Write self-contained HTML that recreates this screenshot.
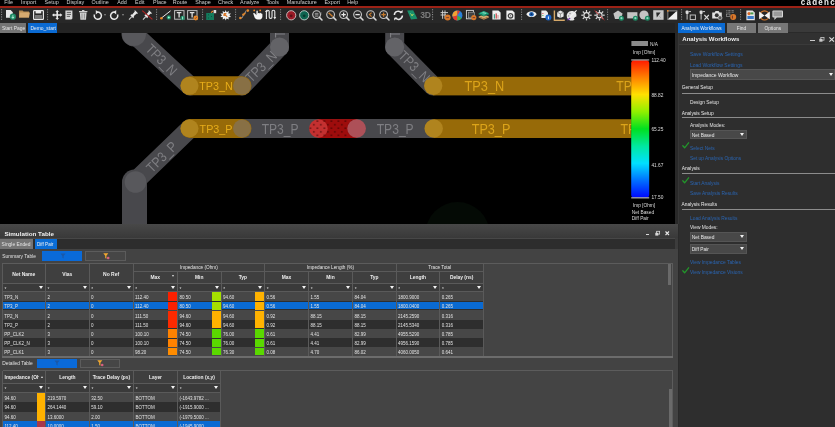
<!DOCTYPE html>
<html><head><meta charset="utf-8">
<style>
*{margin:0;padding:0;box-sizing:border-box}
html,body{width:835px;height:427px;overflow:hidden;background:#2a2a2a;font-family:"Liberation Sans",sans-serif;color:#ddd;position:relative}
.a{position:absolute}
.t{position:absolute;white-space:nowrap;line-height:1}
#root{position:absolute;left:0;top:0;width:835px;height:427px;overflow:hidden;will-change:transform}
svg{overflow:visible}
#canvas{left:0;top:33px;width:675px;height:191px;background:#000;overflow:hidden}
</style></head><body>
<div id="root"><div class="a" style="left:0.00px;top:0.00px;width:835.00px;height:6.00px;background:#000;"></div>
<div class="t" style="left:4.2px;top:0.2px;font-size:5.4px;color:#d0d0d0">File</div>
<div class="t" style="left:21px;top:0.2px;font-size:5.4px;color:#d0d0d0">Import</div>
<div class="t" style="left:44.6px;top:0.2px;font-size:5.4px;color:#d0d0d0">Setup</div>
<div class="t" style="left:66.5px;top:0.2px;font-size:5.4px;color:#d0d0d0">Display</div>
<div class="t" style="left:91.6px;top:0.2px;font-size:5.4px;color:#d0d0d0">Outline</div>
<div class="t" style="left:117.2px;top:0.2px;font-size:5.4px;color:#d0d0d0">Add</div>
<div class="t" style="left:135.1px;top:0.2px;font-size:5.4px;color:#d0d0d0">Edit</div>
<div class="t" style="left:153.1px;top:0.2px;font-size:5.4px;color:#d0d0d0">Place</div>
<div class="t" style="left:172.8px;top:0.2px;font-size:5.4px;color:#d0d0d0">Route</div>
<div class="t" style="left:195.2px;top:0.2px;font-size:5.4px;color:#d0d0d0">Shape</div>
<div class="t" style="left:218px;top:0.2px;font-size:5.4px;color:#d0d0d0">Check</div>
<div class="t" style="left:240.1px;top:0.2px;font-size:5.4px;color:#d0d0d0">Analyze</div>
<div class="t" style="left:266.4px;top:0.2px;font-size:5.4px;color:#d0d0d0">Tools</div>
<div class="t" style="left:286.8px;top:0.2px;font-size:5.4px;color:#d0d0d0">Manufacture</div>
<div class="t" style="left:324.5px;top:0.2px;font-size:5.4px;color:#d0d0d0">Export</div>
<div class="t" style="left:347.2px;top:0.2px;font-size:5.4px;color:#d0d0d0">Help</div>
<div class="t" style="left:800.8px;top:-1px;font-size:8px;color:#f0f0f0;font-weight:bold;letter-spacing:1.25px;transform:scaleY(1.15);transform-origin:0 100%">cadence</div>
<div class="a" style="left:0.00px;top:5.60px;width:835.00px;height:2.50px;background:#9c2216;"></div>
<div class="a" style="left:0.00px;top:8.00px;width:835.00px;height:14.50px;background:#282828;"></div>
<svg class="a" style="left:5.7px;top:10.2px" width="10" height="10" viewBox="0 0 10 10"><path d="M0 0H4.6L6.8 2.2V7.8H0Z" fill="#e8e8e8"/><circle cx="6.9" cy="6.7" r="3.1" fill="#1e8a64"/><path d="M6.9 5.2V8.2M5.6 6.9L6.9 8.3L8.2 6.9" stroke="#cfe" stroke-width="0.8" fill="none"/></svg>
<svg class="a" style="left:1.1px;top:9.3px" width="1.4" height="11" viewBox="0 0 1.4 11"><rect x="0" y="0.2" width="1.1" height="1.1" fill="#8a8a8a"/><rect x="0" y="2.6" width="1.1" height="1.1" fill="#8a8a8a"/><rect x="0" y="5" width="1.1" height="1.1" fill="#8a8a8a"/><rect x="0" y="7.4" width="1.1" height="1.1" fill="#8a8a8a"/><rect x="0" y="9.8" width="1.1" height="1.1" fill="#8a8a8a"/></svg>
<svg class="a" style="left:18.9px;top:10.2px" width="11" height="8" viewBox="0 0 11 8"><path d="M0 0.6H3.6L4.6 1.6H10V7.5H0Z" fill="#b88c52"/><path d="M0.8 2.6H10.9L10 7.5H0Z" fill="#d6aa70"/></svg>
<svg class="a" style="left:32.7px;top:10px" width="11" height="10" viewBox="0 0 11 10"><rect x="0.6" y="0.6" width="9.8" height="8.8" rx="0.6" fill="none" stroke="#e8e8e8" stroke-width="1.2"/><rect x="2.6" y="0.6" width="5.6" height="2.8" fill="#e8e8e8"/><rect x="2" y="5" width="7" height="4" fill="#777"/></svg>
<svg class="a" style="left:46.8px;top:9.3px" width="1.4" height="11" viewBox="0 0 1.4 11"><rect x="0" y="0.2" width="1.1" height="1.1" fill="#8a8a8a"/><rect x="0" y="2.6" width="1.1" height="1.1" fill="#8a8a8a"/><rect x="0" y="5" width="1.1" height="1.1" fill="#8a8a8a"/><rect x="0" y="7.4" width="1.1" height="1.1" fill="#8a8a8a"/><rect x="0" y="9.8" width="1.1" height="1.1" fill="#8a8a8a"/></svg>
<svg class="a" style="left:51.6px;top:9.8px" width="10.5" height="10" viewBox="0 0 10.5 10"><path d="M5.2 0L7 2H6V4.2H8.2V3.2L10.4 5L8.2 6.8V5.8H6V8H7L5.2 10L3.4 8H4.4V5.8H2.2V6.8L0 5L2.2 3.2V4.2H4.4V2H3.4Z" fill="#e8e8e8"/></svg>
<svg class="a" style="left:65px;top:9.9px" width="9" height="10" viewBox="0 0 9 10"><path d="M0.4 0.4H7.4V8.6L6.4 9.6H0.4Z" fill="#d8d8d8"/><path d="M1.8 2.4H6M1.8 4.4H6M1.8 6.4H5" stroke="#555" stroke-width="0.9"/></svg>
<svg class="a" style="left:78.8px;top:9.8px" width="8.6" height="10" viewBox="0 0 8.6 10"><rect x="0" y="1" width="8.4" height="1.2" fill="#cfcfcf"/><rect x="3" y="0" width="2.4" height="1" fill="#cfcfcf"/><path d="M0.8 2.6H7.6L7 9.8H1.4Z" fill="#d0d0d0"/><path d="M3 3.6V8.6M5.4 3.6V8.6" stroke="#8a8a8a" stroke-width="0.9"/></svg>
<svg class="a" style="left:91.9px;top:9.7px" width="10" height="10.5" viewBox="0 0 10 10.5"><path d="M2.4 4.6A3.6 3.6 0 1 0 5 2.2" fill="none" stroke="#e8e8e8" stroke-width="1.5"/><path d="M3.8 0L6.4 2.2L3.8 4.4Z" fill="#e8e8e8"/></svg>
<div class="a" style="left:103.60px;top:13.60px;width:0;height:0;border-left:1.40px solid transparent;border-right:1.40px solid transparent;border-top:2.00px solid #8a8a8a"></div>
<svg class="a" style="left:109.8px;top:9.7px" width="10" height="10.5" viewBox="0 0 10 10.5"><path d="M7.6 4.6A3.6 3.6 0 1 1 5 2.2" fill="none" stroke="#e8e8e8" stroke-width="1.5"/><path d="M6.2 0L3.6 2.2L6.2 4.4Z" fill="#e8e8e8"/></svg>
<div class="a" style="left:122.30px;top:13.60px;width:0;height:0;border-left:1.40px solid transparent;border-right:1.40px solid transparent;border-top:2.00px solid #8a8a8a"></div>
<svg class="a" style="left:128px;top:9.8px" width="11" height="10" viewBox="0 0 11 10"><path d="M1 9.6L3.8 6.6" stroke="#cfcfcf" stroke-width="1.1"/><path d="M2.4 5.2L5.2 8.2L6.2 6.8L5.6 6.2L8.8 3.4L9.6 3.8L10 3.2L7 0.2L6.4 0.8L6.8 1.6L4 4.8L3.4 4.2Z" fill="#e8e8e8"/></svg>
<svg class="a" style="left:141.7px;top:9.8px" width="11" height="10" viewBox="0 0 11 10"><path d="M1 9.6L3.8 6.6" stroke="#cfcfcf" stroke-width="1.1"/><path d="M2.4 5.2L5.2 8.2L6.2 6.8L5.6 6.2L8.8 3.4L9.6 3.8L10 3.2L7 0.2L6.4 0.8L6.8 1.6L4 4.8L3.4 4.2Z" fill="#e8e8e8"/><path d="M0.2 0.6L10.4 9.4" stroke="#b22222" stroke-width="1.1"/></svg>
<svg class="a" style="left:155.8px;top:9.3px" width="1.4" height="11" viewBox="0 0 1.4 11"><rect x="0" y="0.2" width="1.1" height="1.1" fill="#8a8a8a"/><rect x="0" y="2.6" width="1.1" height="1.1" fill="#8a8a8a"/><rect x="0" y="5" width="1.1" height="1.1" fill="#8a8a8a"/><rect x="0" y="7.4" width="1.1" height="1.1" fill="#8a8a8a"/><rect x="0" y="9.8" width="1.1" height="1.1" fill="#8a8a8a"/></svg>
<svg class="a" style="left:159.8px;top:9.8px" width="12" height="10" viewBox="0 0 12 10"><path d="M1.2 8.2L10.6 0.8" stroke="#e8e8e8" stroke-width="1"/><circle cx="1.4" cy="8.2" r="1.3" fill="#e8892a"/><circle cx="8.8" cy="7.4" r="2.2" fill="#1e8a64"/><circle cx="8.8" cy="7.4" r="1" fill="#9fd"/></svg>
<svg class="a" style="left:173.5px;top:9.9px" width="11" height="10" viewBox="0 0 11 10"><rect x="0.6" y="0.6" width="9.4" height="8.6" fill="none" stroke="#bdbdbd" stroke-width="1"/><path d="M2.8 2.6H7.4M5.1 2.6V7.6" stroke="#e0e0e0" stroke-width="1.3"/><circle cx="8.6" cy="8" r="2.2" fill="#1e8a64"/><path d="M8.6 6.6V9.4" stroke="#cfe" stroke-width="0.8"/></svg>
<svg class="a" style="left:187px;top:9.9px" width="11" height="10" viewBox="0 0 11 10"><rect x="0.6" y="0.6" width="9.4" height="8.6" fill="none" stroke="#bdbdbd" stroke-width="1"/><path d="M2.8 2.6H7.4M5.1 2.6V7.6" stroke="#e0e0e0" stroke-width="1.3"/><circle cx="8.8" cy="8" r="2.4" fill="#e8892a"/><path d="M7.8 9L9.8 7" stroke="#633" stroke-width="0.6"/></svg>
<svg class="a" style="left:201.9px;top:9.3px" width="1.4" height="11" viewBox="0 0 1.4 11"><rect x="0" y="0.2" width="1.1" height="1.1" fill="#8a8a8a"/><rect x="0" y="2.6" width="1.1" height="1.1" fill="#8a8a8a"/><rect x="0" y="5" width="1.1" height="1.1" fill="#8a8a8a"/><rect x="0" y="7.4" width="1.1" height="1.1" fill="#8a8a8a"/><rect x="0" y="9.8" width="1.1" height="1.1" fill="#8a8a8a"/></svg>
<svg class="a" style="left:205.7px;top:9.6px" width="11.5" height="10.5" viewBox="0 0 11.5 10.5"><rect x="0.2" y="3" width="7.8" height="7" fill="#147a5c"/><path d="M2 4.8H3M5 6.5H6M2 8H3" stroke="#0a4a38" stroke-width="0.8"/><path d="M5 2.6L7 1" stroke="#e8892a" stroke-width="1.2"/><rect x="7.6" y="0" width="2.6" height="3.2" fill="#ddd"/></svg>
<svg class="a" style="left:220px;top:9.6px" width="11.5" height="10.5" viewBox="0 0 11.5 10.5"><path d="M5.7 0L6.6 2.2L8.8 1L8.4 3.4L11 3.6L9.4 5.3L11 7L8.4 7.2L8.8 9.6L6.6 8.4L5.7 10.6L4.8 8.4L2.6 9.6L3 7.2L0.4 7L2 5.3L0.4 3.6L3 3.4L2.6 1L4.8 2.2Z" fill="#f0f0f0"/><rect x="3.4" y="3" width="4.6" height="4.6" fill="#eee"/><path d="M4 3.6L7.2 6.8M4 3.6H6.4M4 3.6V6" stroke="#d8782a" stroke-width="1.2"/></svg>
<svg class="a" style="left:234.6px;top:9.3px" width="1.4" height="11" viewBox="0 0 1.4 11"><rect x="0" y="0.2" width="1.1" height="1.1" fill="#8a8a8a"/><rect x="0" y="2.6" width="1.1" height="1.1" fill="#8a8a8a"/><rect x="0" y="5" width="1.1" height="1.1" fill="#8a8a8a"/><rect x="0" y="7.4" width="1.1" height="1.1" fill="#8a8a8a"/><rect x="0" y="9.8" width="1.1" height="1.1" fill="#8a8a8a"/></svg>
<svg class="a" style="left:238.6px;top:9.4px" width="11" height="11" viewBox="0 0 11 11"><path d="M1.4 9L3.4 8.6L4.6 5L6 4.6L7 1.6" stroke="#aaa" stroke-width="0.8" fill="none"/><circle cx="1.4" cy="9" r="1.3" fill="#e8892a"/><circle cx="4.4" cy="5.6" r="1.2" fill="#e8892a"/><circle cx="5.6" cy="4.4" r="0.9" fill="#e8892a"/><circle cx="8.8" cy="1.6" r="1.3" fill="#e8892a"/></svg>
<svg class="a" style="left:252px;top:9.4px" width="11" height="11" viewBox="0 0 11 11"><path d="M1.2 4.6C1.6 3.8 2.6 4 3.2 4.8L4.4 6.2V2.2C4.4 1.2 5.8 1.2 5.8 2.2V5L6 4.4C6.4 3.6 7.4 3.8 7.4 4.6L7.6 4.2C8 3.6 9 3.8 9 4.6L9.2 4.6C9.6 4.2 10.4 4.4 10.4 5.2V7.4C10.4 9.4 9 10.6 7 10.6H5.6C4.2 10.6 3.4 9.8 2.6 8.6Z" fill="#f4f4f4"/><circle cx="2.2" cy="1.4" r="0.9" fill="#e8892a"/><circle cx="8.2" cy="1.4" r="0.9" fill="#e8892a"/></svg>
<svg class="a" style="left:265.4px;top:9.4px" width="11.5" height="11" viewBox="0 0 11.5 11"><path d="M1.4 10V2.6A1.4 1.4 0 0 1 4.2 2.6V8A1.4 1.4 0 0 0 7 8V2.6A1.4 1.4 0 0 1 9.8 2.6V9" fill="none" stroke="#e8e8e8" stroke-width="1.1"/><path d="M0 3L1.4 0.8L2.8 3Z" fill="#e8e8e8"/><path d="M8.4 8L9.8 10.4L11.2 8Z" fill="#e8e8e8"/></svg>
<svg class="a" style="left:279.79999999999995px;top:9.3px" width="1.4" height="11" viewBox="0 0 1.4 11"><rect x="0" y="0.2" width="1.1" height="1.1" fill="#8a8a8a"/><rect x="0" y="2.6" width="1.1" height="1.1" fill="#8a8a8a"/><rect x="0" y="5" width="1.1" height="1.1" fill="#8a8a8a"/><rect x="0" y="7.4" width="1.1" height="1.1" fill="#8a8a8a"/><rect x="0" y="9.8" width="1.1" height="1.1" fill="#8a8a8a"/></svg>
<svg class="a" style="left:285.6px;top:9.6px" width="11" height="11" viewBox="0 0 11 11"><circle cx="5.2" cy="5.3" r="4.6" fill="#9a1a26" stroke="#d0c4c4" stroke-width="0.9"/><circle cx="5.2" cy="5.8" r="1.4" fill="#5a1016"/></svg>
<svg class="a" style="left:298.5px;top:9.6px" width="11" height="11" viewBox="0 0 11 11"><circle cx="5.2" cy="5.3" r="4.6" fill="#0e6450" stroke="#c4d0cc" stroke-width="0.9"/><circle cx="5.2" cy="5.8" r="1.4" fill="#0a3a30"/></svg>
<svg class="a" style="left:311.7px;top:9.6px" width="11" height="11" viewBox="0 0 11 11"><circle cx="4.6" cy="4.6" r="3.9" fill="#2c2c2c" stroke="#c6c6c6" stroke-width="1.1"/><path d="M2.8 3.4H6.4M2.8 4.8H6.4M2.8 6.2H6.4" stroke="#bbb" stroke-width="0.7"/><path d="M9 2V5" stroke="#999" stroke-width="0.5"/><path d="M7.4 7.4L10 10" stroke="#d8d8d8" stroke-width="1.5" stroke-linecap="round"/></svg>
<svg class="a" style="left:325.6px;top:9.6px" width="11" height="11" viewBox="0 0 11 11"><circle cx="4.6" cy="4.6" r="3.9" fill="#2c2c2c" stroke="#c6c6c6" stroke-width="1.1"/><path d="M2.6 2.8L6.6 6.4" stroke="#c87a2a" stroke-width="1.4"/><path d="M7.4 7.4L10 10" stroke="#d8d8d8" stroke-width="1.5" stroke-linecap="round"/></svg>
<svg class="a" style="left:338.8px;top:9.6px" width="11" height="11" viewBox="0 0 11 11"><circle cx="4.6" cy="4.6" r="3.9" fill="#2c2c2c" stroke="#c6c6c6" stroke-width="1.1"/><path d="M2.4 4.6H6.8M4.6 2.4V6.8" stroke="#e8e8e8" stroke-width="1.2"/><path d="M7.4 7.4L10 10" stroke="#d8d8d8" stroke-width="1.5" stroke-linecap="round"/></svg>
<svg class="a" style="left:352.7px;top:9.6px" width="11" height="11" viewBox="0 0 11 11"><circle cx="4.6" cy="4.6" r="3.9" fill="#2c2c2c" stroke="#c6c6c6" stroke-width="1.1"/><path d="M2.4 4.6H6.8" stroke="#e8e8e8" stroke-width="1.3"/><path d="M7.4 7.4L10 10" stroke="#d8d8d8" stroke-width="1.5" stroke-linecap="round"/></svg>
<svg class="a" style="left:365.5px;top:9.6px" width="11" height="11" viewBox="0 0 11 11"><circle cx="4.6" cy="4.6" r="3.9" fill="#2c2c2c" stroke="#c6c6c6" stroke-width="1.1"/><path d="M5.6 2.6L3.4 4.6L5.6 6.6" stroke="#c87a2a" stroke-width="1.2" fill="none"/><path d="M7.4 7.4L10 10" stroke="#d8d8d8" stroke-width="1.5" stroke-linecap="round"/></svg>
<svg class="a" style="left:378.7px;top:9.6px" width="11" height="11" viewBox="0 0 11 11"><circle cx="4.6" cy="4.6" r="3.9" fill="#2c2c2c" stroke="#c6c6c6" stroke-width="1.1"/><path d="M2.4 4.6H6.8M4.6 2.4V6.8" stroke="#c87a2a" stroke-width="1.2"/><path d="M7.4 7.4L10 10" stroke="#d8d8d8" stroke-width="1.5" stroke-linecap="round"/></svg>
<svg class="a" style="left:393.3px;top:9.7px" width="11" height="10.5" viewBox="0 0 11 10.5"><path d="M1.4 5A3.8 3.8 0 0 1 8.4 3" fill="none" stroke="#e8e8e8" stroke-width="1.5"/><path d="M9.4 5.6A3.8 3.8 0 0 1 2.4 7.6" fill="none" stroke="#e8e8e8" stroke-width="1.5"/><path d="M6.4 2.8H9.6V0Z" fill="#e8e8e8"/><path d="M4.4 7.8H1.2V10.6Z" fill="#e8e8e8"/></svg>
<svg class="a" style="left:407.2px;top:9.8px" width="11" height="10" viewBox="0 0 11 10"><path d="M0.2 0.6L6.2 0.2L10.4 8.8L4 9.6Z" fill="#18906a"/><path d="M3 3L5 5.6L7 4" stroke="#7fdc8a" stroke-width="0.7" fill="none"/><circle cx="5" cy="5" r="0.8" fill="#e0e040"/></svg>
<div class="t" style="left:420.3px;top:11.2px;font-size:8.6px;color:#7c7c7c;font-weight:bold;letter-spacing:-0.4px">3D</div>
<svg class="a" style="left:432.4px;top:9.3px" width="1.4" height="11" viewBox="0 0 1.4 11"><rect x="0" y="0.2" width="1.1" height="1.1" fill="#8a8a8a"/><rect x="0" y="2.6" width="1.1" height="1.1" fill="#8a8a8a"/><rect x="0" y="5" width="1.1" height="1.1" fill="#8a8a8a"/><rect x="0" y="7.4" width="1.1" height="1.1" fill="#8a8a8a"/><rect x="0" y="9.8" width="1.1" height="1.1" fill="#8a8a8a"/></svg>
<svg class="a" style="left:439.5px;top:9.6px" width="11.5" height="11" viewBox="0 0 11.5 11"><path d="M2.6 0.4V8.8M5 0.4V8.8M0.6 2.6H8M0.6 5H6" stroke="#d8d8d8" stroke-width="0.9"/><circle cx="7.6" cy="7.6" r="3" fill="#d8782a"/><path d="M6.2 7.6H9" stroke="#633" stroke-width="0.8"/></svg>
<svg class="a" style="left:452px;top:9.7px" width="11.5" height="11" viewBox="0 0 11.5 11"><circle cx="5.4" cy="5.4" r="5" fill="#2a80d8"/><path d="M5.4 5.4L5.4 0.4A5 5 0 0 0 0.6 6.8Z" fill="#f2a030"/><path d="M5.4 5.4L0.6 6.8A5 5 0 0 0 5.4 10.4Z" fill="#e83a2a"/><path d="M5.4 5.4L5.4 10.4A5 5 0 0 0 9.6 8Z" fill="#40b040"/><path d="M5.4 5.4V0.4A5 5 0 0 1 8 1Z" fill="#e83a2a"/></svg>
<svg class="a" style="left:466px;top:9.8px" width="11" height="10" viewBox="0 0 11 10"><rect x="0.4" y="0.4" width="7" height="8.4" fill="none" stroke="#d8d8d8" stroke-width="0.9"/><rect x="2.4" y="2.2" width="6.2" height="5.6" fill="#444" stroke="#aaa" stroke-width="0.6"/><circle cx="7.8" cy="7.6" r="2.6" fill="#d8782a"/><path d="M6.6 7.6H9" stroke="#633" stroke-width="0.8"/></svg>
<svg class="a" style="left:478.4px;top:9.6px" width="11.5" height="10.5" viewBox="0 0 11.5 10.5"><path d="M0.6 6.4L5.8 4.4L11 6.4L5.8 8.6Z" fill="#d8a870"/><path d="M0.6 7.6L5.8 9.8L11 7.6V6.4L5.8 8.6L0.6 6.4Z" fill="#c08850"/><path d="M0.6 3.2L5.8 1L11 3.2L5.8 5.4Z" fill="#28b08a"/><path d="M0.6 4.4L5.8 6.6L11 4.4V3.2L5.8 5.4L0.6 3.2Z" fill="#0e8060"/><path d="M4.6 2.6L8 3.4" stroke="#e0f0e0" stroke-width="0.6"/></svg>
<svg class="a" style="left:492.3px;top:9.8px" width="10" height="10" viewBox="0 0 10 10"><path d="M0.4 0.4H6.4L8.6 2.6V9.6H0.4Z" fill="#f0f0f0"/><rect x="1.8" y="4.2" width="1.2" height="4.4" fill="#3aa088"/><rect x="3.6" y="3.4" width="1.2" height="5.2" fill="#c84040"/><rect x="5.4" y="5" width="1.2" height="3.6" fill="#d8a0a0"/></svg>
<svg class="a" style="left:506px;top:9.8px" width="10" height="10" viewBox="0 0 10 10"><path d="M0.4 0.4H6.4L8.6 2.6V9.6H0.4Z" fill="#f0f0f0"/><circle cx="4.5" cy="5.8" r="2.2" fill="none" stroke="#444" stroke-width="1.3"/><circle cx="4.5" cy="5.8" r="0.6" fill="#444"/></svg>
<svg class="a" style="left:521.1999999999999px;top:9.3px" width="1.4" height="11" viewBox="0 0 1.4 11"><rect x="0" y="0.2" width="1.1" height="1.1" fill="#8a8a8a"/><rect x="0" y="2.6" width="1.1" height="1.1" fill="#8a8a8a"/><rect x="0" y="5" width="1.1" height="1.1" fill="#8a8a8a"/><rect x="0" y="7.4" width="1.1" height="1.1" fill="#8a8a8a"/><rect x="0" y="9.8" width="1.1" height="1.1" fill="#8a8a8a"/></svg>
<svg class="a" style="left:526px;top:10.4px" width="11" height="9" viewBox="0 0 11 9"><path d="M0.3 4.2C2.6 0.4 8.4 0.4 10.7 4.2C8.4 8 2.6 8 0.3 4.2Z" fill="#f0f0f0"/><circle cx="5.5" cy="4.2" r="2.3" fill="#1a5fb0"/><circle cx="5.5" cy="4.2" r="0.9" fill="#0a2a60"/></svg>
<svg class="a" style="left:541px;top:9.6px" width="11" height="11" viewBox="0 0 11 11"><path d="M0.4 0.4H5L7 2.4V8H0.4Z" fill="#ececec"/><rect x="1.4" y="3" width="1" height="1" fill="#d44"/><rect x="1.4" y="5" width="1" height="1" fill="#4a4"/><circle cx="7.4" cy="7.6" r="3" fill="#1a64c8"/><path d="M7.4 6.4V9.2" stroke="#fff" stroke-width="0.9"/></svg>
<svg class="a" style="left:554px;top:9.6px" width="11.5" height="11" viewBox="0 0 11.5 11"><path d="M0.4 0.4V10.2H10.8" fill="none" stroke="#d6a868" stroke-width="1.4"/><path d="M2 9.8V8.6M4 9.8V8.6M6 9.8V8.6M8 9.8V8.6M1.2 2V2M1.2 4" stroke="#444" stroke-width="0.6"/><path d="M3.2 2.2L6.4 0.6L9.6 2.2V6.4L6.4 8L3.2 6.4Z" fill="#e8e8e8"/><path d="M3.2 2.2L6.4 3.8L9.6 2.2M6.4 3.8V8" stroke="#555" stroke-width="0.6" fill="none"/></svg>
<svg class="a" style="left:566.4px;top:9.6px" width="11" height="11" viewBox="0 0 11 11"><path d="M5.6 1A4.8 4.8 0 1 0 8.6 9.4C6.8 8.4 9 7 10.4 6.4C11 3 8.6 0.8 5.6 1Z" fill="#e6e6e6"/><path d="M1 10L3.6 7.4L4.6 8.4L2 10.6Z" fill="#7a3ab8"/><path d="M3.6 7.4L10.6 0.4" stroke="#f4f4f4" stroke-width="1.2"/><circle cx="4" cy="3.6" r="0.8" fill="#999"/><circle cx="2.6" cy="6" r="0.8" fill="#999"/></svg>
<svg class="a" style="left:580.7px;top:9.8px" width="11" height="10.5" viewBox="0 0 11 10.5"><rect x="4.9" y="0" width="1.2" height="2" fill="#d8d8d8" transform="rotate(0 5.5 5.2)"/><rect x="4.9" y="0" width="1.2" height="2" fill="#d8d8d8" transform="rotate(45 5.5 5.2)"/><rect x="4.9" y="0" width="1.2" height="2" fill="#d8d8d8" transform="rotate(90 5.5 5.2)"/><rect x="4.9" y="0" width="1.2" height="2" fill="#d8d8d8" transform="rotate(135 5.5 5.2)"/><rect x="4.9" y="0" width="1.2" height="2" fill="#d8d8d8" transform="rotate(180 5.5 5.2)"/><rect x="4.9" y="0" width="1.2" height="2" fill="#d8d8d8" transform="rotate(225 5.5 5.2)"/><rect x="4.9" y="0" width="1.2" height="2" fill="#d8d8d8" transform="rotate(270 5.5 5.2)"/><rect x="4.9" y="0" width="1.2" height="2" fill="#d8d8d8" transform="rotate(315 5.5 5.2)"/><circle cx="5.5" cy="5.2" r="2.6" fill="none" stroke="#e8e8e8" stroke-width="1.1"/></svg>
<svg class="a" style="left:593.7px;top:9.8px" width="11" height="10.5" viewBox="0 0 11 10.5"><rect x="4.9" y="0" width="1.2" height="2" fill="#d8d8d8" transform="rotate(0 5.5 5.2)"/><rect x="4.9" y="0" width="1.2" height="2" fill="#d8d8d8" transform="rotate(45 5.5 5.2)"/><rect x="4.9" y="0" width="1.2" height="2" fill="#d8d8d8" transform="rotate(90 5.5 5.2)"/><rect x="4.9" y="0" width="1.2" height="2" fill="#d8d8d8" transform="rotate(135 5.5 5.2)"/><rect x="4.9" y="0" width="1.2" height="2" fill="#d8d8d8" transform="rotate(180 5.5 5.2)"/><rect x="4.9" y="0" width="1.2" height="2" fill="#d8d8d8" transform="rotate(225 5.5 5.2)"/><rect x="4.9" y="0" width="1.2" height="2" fill="#d8d8d8" transform="rotate(270 5.5 5.2)"/><rect x="4.9" y="0" width="1.2" height="2" fill="#d8d8d8" transform="rotate(315 5.5 5.2)"/><circle cx="5.5" cy="5.2" r="2.6" fill="none" stroke="#e8e8e8" stroke-width="1.1"/><path d="M0.6 0.4L10.4 10" stroke="#c02828" stroke-width="1"/><circle cx="5.5" cy="5.2" r="1.1" fill="#555"/></svg>
<svg class="a" style="left:607.4px;top:9.3px" width="1.4" height="11" viewBox="0 0 1.4 11"><rect x="0" y="0.2" width="1.1" height="1.1" fill="#8a8a8a"/><rect x="0" y="2.6" width="1.1" height="1.1" fill="#8a8a8a"/><rect x="0" y="5" width="1.1" height="1.1" fill="#8a8a8a"/><rect x="0" y="7.4" width="1.1" height="1.1" fill="#8a8a8a"/><rect x="0" y="9.8" width="1.1" height="1.1" fill="#8a8a8a"/></svg>
<svg class="a" style="left:613px;top:9.6px" width="11.5" height="11" viewBox="0 0 11.5 11"><path d="M5 0.4L9.6 3.6L8 9H2L0.4 3.6Z" fill="#c4c4c4"/><circle cx="8.4" cy="8.2" r="2.5" fill="#1e8a64"/><circle cx="8.4" cy="8.2" r="1.1" fill="#8fd8c0"/></svg>
<svg class="a" style="left:626.8px;top:9.6px" width="11.5" height="11" viewBox="0 0 11.5 11"><rect x="0.2" y="2.2" width="10.2" height="6.2" fill="#c4c4c4"/><circle cx="8.4" cy="8.2" r="2.5" fill="#1e8a64"/><circle cx="8.4" cy="8.2" r="1.1" fill="#8fd8c0"/></svg>
<svg class="a" style="left:639.4px;top:9.6px" width="11.5" height="11" viewBox="0 0 11.5 11"><circle cx="5" cy="5" r="4.6" fill="#c4c4c4"/><circle cx="8.4" cy="8.2" r="2.5" fill="#1e8a64"/><circle cx="8.4" cy="8.2" r="1.1" fill="#8fd8c0"/></svg>
<svg class="a" style="left:653px;top:9.8px" width="11" height="10" viewBox="0 0 11 10"><rect x="0.2" y="0.2" width="10.4" height="9.6" fill="#c8c8c8"/><path d="M3.2 2.6H7.6L3.8 7.4Z" fill="#2a2a2a"/><path d="M5 5L8 8" stroke="#999" stroke-width="0.6"/></svg>
<svg class="a" style="left:666.7px;top:9.8px" width="11" height="10" viewBox="0 0 11 10"><rect x="0.4" y="0.4" width="9.8" height="9.2" fill="#f0f0f0"/><path d="M0.4 0.4H10.2L0.4 9.6Z" fill="#1a1a1a"/><path d="M0.4 0.4H10.2V1.4H1.4V9.6H0.4Z" fill="#777"/><circle cx="0.8" cy="0.8" r="0.9" fill="#e8892a"/></svg>
<svg class="a" style="left:680.8px;top:9.3px" width="1.4" height="11" viewBox="0 0 1.4 11"><rect x="0" y="0.2" width="1.1" height="1.1" fill="#8a8a8a"/><rect x="0" y="2.6" width="1.1" height="1.1" fill="#8a8a8a"/><rect x="0" y="5" width="1.1" height="1.1" fill="#8a8a8a"/><rect x="0" y="7.4" width="1.1" height="1.1" fill="#8a8a8a"/><rect x="0" y="9.8" width="1.1" height="1.1" fill="#8a8a8a"/></svg>
<svg class="a" style="left:684.8px;top:9.6px" width="11" height="11" viewBox="0 0 11 11"><rect x="0.6" y="0.4" width="3" height="3.6" rx="1" fill="#ddd"/><path d="M2.1 4V9.6" stroke="#ccc" stroke-width="1"/><path d="M3.6 1.6H6" stroke="#ccc" stroke-width="1"/><rect x="5.2" y="5" width="5.2" height="4.6" fill="none" stroke="#ccc" stroke-width="0.9"/></svg>
<svg class="a" style="left:698.5px;top:9.6px" width="11" height="11" viewBox="0 0 11 11"><rect x="0.6" y="0.4" width="3" height="3.6" rx="1" fill="#ddd"/><path d="M2.1 4V9.6M3.6 1.6H6" stroke="#ccc" stroke-width="1"/><path d="M5.4 5L9.8 9.6M9.8 5L5.4 9.6" stroke="#ddd" stroke-width="1.1"/></svg>
<svg class="a" style="left:712.2px;top:9.8px" width="11" height="10" viewBox="0 0 11 10"><path d="M0.2 2.4H2.6L3.6 1H6.6L7.6 2.4H9.8V8.4H0.2Z" fill="#e0e0e0"/><circle cx="4.8" cy="5.2" r="2" fill="#333"/><circle cx="8" cy="7.8" r="2" fill="#555" stroke="#ddd" stroke-width="0.6"/></svg>
<svg class="a" style="left:725.7px;top:9.6px" width="11.5" height="11" viewBox="0 0 11.5 11"><path d="M0.4 0.6H8M0.4 2.2H8" stroke="#c0c0c0" stroke-width="0.7" stroke-dasharray="0.8 0.6"/><rect x="0.4" y="4" width="3.6" height="2.6" fill="none" stroke="#aaa" stroke-width="0.6"/><circle cx="7.2" cy="7" r="3" fill="#d8782a"/><path d="M6.4 5.6V8.6" stroke="#522" stroke-width="0.8"/></svg>
<svg class="a" style="left:740.1px;top:9.3px" width="1.4" height="11" viewBox="0 0 1.4 11"><rect x="0" y="0.2" width="1.1" height="1.1" fill="#8a8a8a"/><rect x="0" y="2.6" width="1.1" height="1.1" fill="#8a8a8a"/><rect x="0" y="5" width="1.1" height="1.1" fill="#8a8a8a"/><rect x="0" y="7.4" width="1.1" height="1.1" fill="#8a8a8a"/><rect x="0" y="9.8" width="1.1" height="1.1" fill="#8a8a8a"/></svg>
<svg class="a" style="left:746px;top:9.6px" width="10" height="11" viewBox="0 0 10 11"><path d="M0.4 0.4H6.6L8.8 2.6V10.2H0.4Z" fill="#e8e8e8"/><circle cx="3" cy="3.6" r="1.6" fill="#d86a2a"/><rect x="4.4" y="2.4" width="3" height="2" fill="#4a9a4a"/><rect x="1.4" y="6" width="6.4" height="3" fill="#3a7ac8"/></svg>
<svg class="a" style="left:758.7px;top:9.6px" width="11" height="11" viewBox="0 0 11 11"><circle cx="5.5" cy="5.4" r="4.6" fill="none" stroke="#d8782a" stroke-width="1.2"/><path d="M0.2 1.6L5.5 5.4L0.2 9.2Z" fill="#f4f4f4"/><path d="M10.8 1.6L5.5 5.4L10.8 9.2Z" fill="#f4f4f4"/></svg>
<svg class="a" style="left:772px;top:9.8px" width="11.5" height="10.5" viewBox="0 0 11.5 10.5"><rect x="0.4" y="0.4" width="10.6" height="7" rx="1" fill="#d8d8d8"/><rect x="1.4" y="1.4" width="8.6" height="5" fill="#9a9a9a"/><path d="M2.4 7.2V10L5 7.2Z" fill="#d8d8d8"/></svg>
<div class="a" style="left:0.00px;top:22.50px;width:677.00px;height:10.50px;background:#232323;"></div>
<div class="a" style="left:0.00px;top:23.20px;width:26.00px;height:9.80px;background:#747474;"></div>
<div class="t" style="left:1.90px;top:27.00px;font-size:4.95px;color:#e6e6e6;">Start Page</div>
<div class="a" style="left:28.00px;top:23.20px;width:29.00px;height:9.80px;background:#0a6ad2;"></div>
<div class="t" style="left:30.40px;top:27.00px;font-size:4.95px;color:#f2f2f2;">Demo_start</div>
<div id="canvas" class="a">
<svg width="675" height="191" viewBox="0 33 675 191" style="position:absolute;left:0;top:0">
<defs>
<pattern id="dots" width="7" height="7.1" patternUnits="userSpaceOnUse" x="324.4" y="121.1"><circle cx="0" cy="0" r="0.75" fill="#300000"/><circle cx="7" cy="0" r="0.75" fill="#300000"/><circle cx="0" cy="7.1" r="0.75" fill="#300000"/><circle cx="7" cy="7.1" r="0.75" fill="#300000"/><circle cx="3.5" cy="3.55" r="0.75" fill="#300000"/></pattern>
<radialGradient id="glow" cx="50%" cy="50%" r="50%"><stop offset="0" stop-color="#0b160b"/><stop offset="1" stop-color="#050a05"/></radialGradient>
</defs>
<circle cx="457.5" cy="234" r="32" fill="#040a05"/>
<g stroke="#48484c" stroke-linecap="round" fill="none">
<line x1="134" y1="10" x2="134" y2="34" stroke-width="25"/>
<line x1="134" y1="34" x2="190" y2="86" stroke-width="19"/>
<line x1="242" y1="86" x2="279.5" y2="47" stroke-width="19"/>
<line x1="279.5" y1="10" x2="279.5" y2="47" stroke-width="19"/>
<line x1="394.7" y1="10" x2="394.7" y2="47" stroke-width="19"/>
<line x1="394.7" y1="47" x2="433" y2="86" stroke-width="19"/>
<line x1="242" y1="128.5" x2="433.7" y2="128.5" stroke-width="19" stroke-linecap="butt"/>
<line x1="190" y1="128.5" x2="134.5" y2="182" stroke-width="19"/>
<line x1="134.5" y1="182" x2="134.5" y2="260" stroke-width="25"/>
</g>
<g fill="#58585c">
<circle cx="134" cy="34" r="12"/>
<circle cx="279.5" cy="47" r="9.5" fill="#636367"/>
<circle cx="394.7" cy="47" r="9.5" fill="#636367"/>
<circle cx="135.5" cy="182" r="10.8"/>
</g>
<!-- orange -->
<line x1="190" y1="85.8" x2="242" y2="85.8" stroke="#976a08" stroke-width="19" stroke-linecap="round"/>
<line x1="190" y1="128.5" x2="242" y2="128.5" stroke="#976a08" stroke-width="19" stroke-linecap="round"/>
<rect x="433" y="76.8" width="198.5" height="18.6" fill="#976a08"/>
<rect x="433.7" y="119.2" width="197.8" height="18.8" fill="#976a08"/>
<circle cx="189.5" cy="85.8" r="9" fill="#b0841e"/>
<circle cx="242" cy="85.8" r="9" fill="#887045"/>
<circle cx="189.5" cy="128.5" r="9" fill="#b0841e"/>
<circle cx="242" cy="128.5" r="9" fill="#887045"/>
<circle cx="433.2" cy="85.8" r="9.2" fill="#b0841e"/>
<circle cx="433.7" cy="128.5" r="9.2" fill="#b0841e"/>
<!-- red -->
<rect x="318.4" y="119.1" width="38.2" height="18.9" fill="#9e0c0c"/>
<rect x="318.4" y="119.1" width="38.2" height="18.9" fill="url(#dots)"/>
<circle cx="318.4" cy="128.5" r="9.3" fill="#c43030"/>
<circle cx="318.4" cy="128.5" r="9.3" fill="url(#dots)"/>
<circle cx="356.6" cy="128.5" r="9.3" fill="#ad5058"/>
<!-- labels -->
<g font-family="Liberation Sans" fill="#7e7e82" font-size="13.9">
<text transform="translate(161.6,59.6) rotate(45) scale(0.87,1)" text-anchor="middle" y="5">TP3_N</text>
<text transform="translate(261,66.5) rotate(-45) scale(0.87,1)" text-anchor="middle" y="5">TP3_N</text>
<text transform="translate(414.3,66.3) rotate(45) scale(0.87,1)" text-anchor="middle" y="5">TP3_N</text>
<text transform="translate(161.6,156.8) rotate(-45) scale(0.87,1)" text-anchor="middle" y="5">TP3_P</text>
<text transform="translate(280.1,133.6) scale(0.87,1)" text-anchor="middle">TP3_P</text>
<text transform="translate(395.2,133.6) scale(0.87,1)" text-anchor="middle">TP3_P</text>
<text transform="translate(279.5,19) rotate(-90) scale(0.87,1)" text-anchor="middle" y="5">TP3_N</text>
<text transform="translate(394.7,19) rotate(-90) scale(0.87,1)" text-anchor="middle" y="5">TP3_N</text>
</g>
<g font-family="Liberation Sans" fill="#e6ac1a" font-size="11.1">
<text transform="translate(216,90.1) scale(0.97,1)" text-anchor="middle">TP3_N</text>
<text transform="translate(216,132.9) scale(0.97,1)" text-anchor="middle">TP3_P</text>
</g>
<clipPath id="lc"><rect x="0" y="33" width="631.5" height="200"/></clipPath><g font-family="Liberation Sans" fill="#dca41a" font-size="14.2" clip-path="url(#lc)">
<text transform="translate(484.4,91.4) scale(0.9,1)" text-anchor="middle">TP3_N</text>
<text transform="translate(491,133.6) scale(0.89,1)" text-anchor="middle">TP3_P</text>
<text transform="translate(616.3,91.4) scale(0.86,1)">TP3_N</text>
<text transform="translate(620.5,133.6) scale(0.87,1)">TP3_P</text>
</g>
<!-- legend -->
<defs><linearGradient id="rainbow" x1="0" y1="0" x2="0" y2="1">
<stop offset="0" stop-color="#ff1a00"/><stop offset="0.125" stop-color="#ff8000"/><stop offset="0.25" stop-color="#ffe000"/><stop offset="0.375" stop-color="#90f000"/><stop offset="0.5" stop-color="#00e020"/><stop offset="0.625" stop-color="#00e8a0"/><stop offset="0.75" stop-color="#00e0ff"/><stop offset="0.875" stop-color="#0070ff"/><stop offset="1" stop-color="#0008ff"/>
</linearGradient></defs>
<rect x="631.2" y="60.2" width="18" height="137.4" rx="3.2" fill="url(#rainbow)"/>
<rect x="631.4" y="41" width="16.6" height="5" fill="#8a8a8a"/>
<rect x="631.2" y="59.4" width="18" height="1.1" fill="#bdbdbd"/>
<rect x="631.2" y="197.3" width="18" height="1.1" fill="#c8c8c8"/>
</svg>
</div>

<div class="t" style="left:650.00px;top:43.00px;font-size:4.8px;color:#dcdcdc;">N/A</div>
<div class="t" style="left:633.00px;top:51.20px;font-size:4.8px;color:#dcdcdc;">Imp [Ohm]</div>
<div class="t" style="left:651.40px;top:59.00px;font-size:4.8px;color:#dcdcdc;">112.40</div>
<div class="t" style="left:651.40px;top:94.00px;font-size:4.8px;color:#dcdcdc;">88.82</div>
<div class="t" style="left:651.40px;top:128.30px;font-size:4.8px;color:#dcdcdc;">65.25</div>
<div class="t" style="left:651.40px;top:163.70px;font-size:4.8px;color:#dcdcdc;">41.67</div>
<div class="t" style="left:651.40px;top:196.40px;font-size:4.8px;color:#dcdcdc;">17.50</div>
<div class="t" style="left:632.80px;top:203.80px;font-size:4.8px;color:#dcdcdc;">Imp [Ohm]</div>
<div class="t" style="left:631.70px;top:210.80px;font-size:4.8px;color:#dcdcdc;">Net Based</div>
<div class="t" style="left:631.70px;top:216.60px;font-size:4.8px;color:#dcdcdc;">Diff Pair</div>
<div class="a" style="left:675.00px;top:22.50px;width:2.70px;height:201.80px;background:#282828;"></div>
<div class="a" style="left:677.70px;top:224.30px;width:1.60px;height:202.70px;background:#2a2a2a;"></div>
<div class="a" style="left:677.50px;top:22.50px;width:157.50px;height:404.50px;background:#2e2e2e;"></div>
<div class="a" style="left:677.50px;top:224.30px;width:1.80px;height:202.70px;background:#2a2a2a;"></div>
<div class="a" style="left:677.50px;top:22.50px;width:157.50px;height:10.50px;background:#2a2a2a;"></div>
<div class="a" style="left:787.80px;top:23.00px;width:47.20px;height:8.80px;background:#3a3a3a;"></div>
<div class="a" style="left:677.90px;top:23.20px;width:47.30px;height:9.60px;background:#0a6ad2;"></div>
<div class="t" style="left:641.55px;top:27.10px;width:120px;text-align:center;font-size:4.7px;color:#f2f2f2;">Analysis Workflows</div>
<div class="a" style="left:726.70px;top:23.20px;width:29.70px;height:9.60px;background:#777777;"></div>
<div class="t" style="left:681.55px;top:27.00px;width:120px;text-align:center;font-size:4.85px;color:#e8e8e8;">Find</div>
<div class="a" style="left:758.00px;top:23.20px;width:29.80px;height:9.60px;background:#777777;"></div>
<div class="t" style="left:712.90px;top:27.00px;width:120px;text-align:center;font-size:4.85px;color:#e8e8e8;">Options</div>
<div class="a" style="left:677.50px;top:33.00px;width:157.50px;height:11.00px;background:#313131;"></div>
<div class="a" style="left:677.50px;top:44.00px;width:157.50px;height:0.80px;background:#3a3a3a;"></div>
<div class="a" style="left:678.10px;top:33.00px;width:0.80px;height:191.00px;background:#363636;"></div>
<div class="t" style="left:682.30px;top:35.90px;font-size:6.05px;color:#f0f0f0;font-weight:bold">Analysis Workflows</div>
<div class="a" style="left:809.80px;top:39.60px;width:5.00px;height:1.00px;background:#c8c8c8;"></div>
<svg class="a" style="left:819.4px;top:36.6px" width="5.5" height="5" viewBox="0 0 5.5 5"><rect x="1.8" y="0.4" width="3.2" height="2.8" fill="none" stroke="#c8c8c8" stroke-width="0.8"/><rect x="0.3" y="1.8" width="3.2" height="2.9" fill="#c8c8c8"/></svg>
<svg class="a" style="left:829.4px;top:36.6px" width="5.5" height="5" viewBox="0 0 5.5 5"><path d="M0.4 0.4L5 4.6M5 0.4L0.4 4.6" stroke="#e0e0e0" stroke-width="1.1"/></svg>
<div class="t" style="left:690.00px;top:52.40px;font-size:5.0px;color:#2a64b0;">Save Workflow Settings</div>
<div class="t" style="left:690.00px;top:62.80px;font-size:5.0px;color:#2a64b0;">Load Workflow Settings</div>
<div class="a" style="left:690.20px;top:69.00px;width:144.80px;height:11.00px;background:#484848;border:0.6px solid #555"></div>
<div class="t" style="left:691.80px;top:73.40px;font-size:5.0px;color:#e8e8e8;">Impedance Workflow</div>
<div class="a" style="left:829.10px;top:73.30px;width:0;height:0;border-left:2.10px solid transparent;border-right:2.10px solid transparent;border-top:3.20px solid #f0f0f0"></div>
<div class="t" style="left:681.70px;top:86.40px;font-size:4.85px;color:#e8e8e8;">General Setup</div>
<div class="a" style="left:681.70px;top:93.20px;width:153.30px;height:0.90px;background:#8c8c8c;"></div>
<div class="t" style="left:689.90px;top:101.20px;font-size:4.85px;color:#e0e0e0;">Design Setup</div>
<div class="t" style="left:681.70px;top:111.60px;font-size:4.85px;color:#e8e8e8;">Analysis Setup</div>
<div class="a" style="left:681.70px;top:117.30px;width:153.30px;height:0.90px;background:#8c8c8c;"></div>
<div class="t" style="left:690.00px;top:123.50px;font-size:4.85px;color:#e0e0e0;">Analysis Modes:</div>
<div class="a" style="left:690.20px;top:130.10px;width:56.80px;height:9.00px;background:#484848;border:0.6px solid #555"></div>
<div class="t" style="left:691.80px;top:134.00px;font-size:4.85px;color:#e8e8e8;">Net Based</div>
<div class="a" style="left:740.20px;top:133.00px;width:0;height:0;border-left:2.10px solid transparent;border-right:2.10px solid transparent;border-top:3.20px solid #f0f0f0"></div>
<svg class="a" style="left:681.5px;top:142.0px" width="8" height="7" viewBox="0 0 8 7"><path d="M0.8 3.8L2.6 5.8L6.6 0.8" fill="none" stroke="#22962a" stroke-width="1.3" stroke-linecap="round" stroke-linejoin="round"/></svg>
<div class="t" style="left:690.00px;top:146.60px;font-size:4.85px;color:#2a64b0;">Select Nets</div>
<div class="t" style="left:690.00px;top:157.40px;font-size:4.85px;color:#2a64b0;">Set up Analysis Options</div>
<div class="t" style="left:681.70px;top:167.30px;font-size:4.85px;color:#e8e8e8;">Analysis</div>
<div class="a" style="left:681.70px;top:173.30px;width:153.30px;height:0.90px;background:#8c8c8c;"></div>
<svg class="a" style="left:681.5px;top:177.3px" width="8" height="7" viewBox="0 0 8 7"><path d="M0.8 3.8L2.6 5.8L6.6 0.8" fill="none" stroke="#22962a" stroke-width="1.3" stroke-linecap="round" stroke-linejoin="round"/></svg>
<div class="t" style="left:690.00px;top:181.90px;font-size:4.85px;color:#2a64b0;">Start Analysis</div>
<div class="t" style="left:690.00px;top:192.40px;font-size:4.85px;color:#2a64b0;">Save Analysis Results</div>
<div class="t" style="left:681.60px;top:203.10px;font-size:4.85px;color:#e8e8e8;">Analysis Results</div>
<div class="a" style="left:681.70px;top:209.20px;width:153.30px;height:0.90px;background:#8c8c8c;"></div>
<div class="t" style="left:690.00px;top:217.40px;font-size:4.85px;color:#2a64b0;">Load Analysis Results</div>
<div class="t" style="left:690.00px;top:225.80px;font-size:4.85px;color:#e0e0e0;">View Modes:</div>
<div class="a" style="left:690.20px;top:231.50px;width:56.80px;height:10.10px;background:#484848;border:0.6px solid #555"></div>
<div class="t" style="left:691.80px;top:236.00px;font-size:4.85px;color:#e8e8e8;">Net Based</div>
<div class="a" style="left:740.20px;top:235.00px;width:0;height:0;border-left:2.10px solid transparent;border-right:2.10px solid transparent;border-top:3.20px solid #f0f0f0"></div>
<div class="a" style="left:690.20px;top:243.70px;width:56.80px;height:9.90px;background:#484848;border:0.6px solid #555"></div>
<div class="t" style="left:691.80px;top:248.00px;font-size:4.85px;color:#e8e8e8;">Diff Pair</div>
<div class="a" style="left:740.20px;top:247.00px;width:0;height:0;border-left:2.10px solid transparent;border-right:2.10px solid transparent;border-top:3.20px solid #f0f0f0"></div>
<div class="t" style="left:690.00px;top:261.00px;font-size:4.85px;color:#2a64b0;">View Impedance Tables</div>
<svg class="a" style="left:681.5px;top:266.6px" width="8" height="7" viewBox="0 0 8 7"><path d="M0.8 3.8L2.6 5.8L6.6 0.8" fill="none" stroke="#22962a" stroke-width="1.3" stroke-linecap="round" stroke-linejoin="round"/></svg>
<div class="t" style="left:690.00px;top:271.10px;font-size:4.85px;color:#2a64b0;">View Impedance Visions</div>
<div class="a" style="left:0.00px;top:224.30px;width:677.70px;height:13.30px;background:linear-gradient(#484848,#393939);"></div>
<div class="t" style="left:4.40px;top:230.60px;font-size:6.25px;color:#f0f0f0;font-weight:bold">Simulation Table</div>
<div class="a" style="left:645.50px;top:233.80px;width:3.60px;height:1.00px;background:#d8d8d8;"></div>
<svg class="a" style="left:654.5px;top:231.0px" width="5" height="5" viewBox="0 0 5 5"><rect x="1.6" y="0.3" width="3" height="2.8" fill="none" stroke="#d8d8d8" stroke-width="0.8"/><rect x="0.3" y="1.8" width="3" height="2.8" fill="#d8d8d8"/></svg>
<svg class="a" style="left:665.2px;top:231.2px" width="5" height="5" viewBox="0 0 5 5"><path d="M0.5 0.5L4 4M4 0.5L0.5 4" stroke="#e8e8e8" stroke-width="1.1"/></svg>
<div class="a" style="left:0.00px;top:237.60px;width:677.70px;height:11.60px;background:#3c3c3c;"></div>
<div class="a" style="left:0.00px;top:238.30px;width:675.00px;height:10.90px;background:#2d2d2d;"></div>
<div class="a" style="left:0.00px;top:237.60px;width:675.00px;height:0.70px;background:#474747;"></div>
<div class="a" style="left:0.00px;top:239.00px;width:33.00px;height:9.90px;background:#747474;"></div>
<div class="t" style="left:1.60px;top:242.90px;font-size:4.87px;color:#e4e4e4;">Single Ended</div>
<div class="a" style="left:35.00px;top:239.00px;width:21.60px;height:9.90px;background:#0a6dd6;"></div>
<div class="t" style="left:37.00px;top:243.00px;font-size:4.6px;color:#f2f2f2;">Diff Pair</div>
<div class="a" style="left:0.00px;top:249.20px;width:677.70px;height:178.00px;background:#434343;"></div>
<div class="t" style="left:2.30px;top:255.30px;font-size:4.85px;color:#e0e0e0;">Summary Table</div>
<div class="a" style="left:42.30px;top:251.30px;width:40.20px;height:9.60px;background:#0a6ad8;"></div>
<div class="a" style="left:85.30px;top:251.30px;width:40.50px;height:9.60px;background:#464646;border:0.7px solid #5c5c5c"></div>
<svg class="a" style="left:59.5px;top:252.8px" width="6" height="6" viewBox="0 0 6 6"><path d="M0.5 0.5H5.5L3.6 3V5.5L2.4 4.8V3Z" fill="#1a58a8"/></svg>
<svg class="a" style="left:102.5px;top:252.6px" width="7" height="7" viewBox="0 0 7 7"><path d="M0.3 0.3H5.3L3.4 2.8V5.8L2.2 5V2.8Z" fill="#f0a830"/><circle cx="5.2" cy="5" r="1.3" fill="#d86080"/></svg>
<div class="a" style="left:2.20px;top:263.00px;width:670.60px;height:93.40px;background:#444444;"></div>
<div class="a" style="left:2.20px;top:263.00px;width:481.20px;height:20.20px;background:#3f3f3f;"></div>
<div class="a" style="left:2.20px;top:283.20px;width:481.20px;height:8.60px;background:#3a3a3a;"></div>
<div class="a" style="left:2.20px;top:291.80px;width:481.20px;height:9.40px;background:#474747;"></div>
<div class="t" style="left:4.20px;top:296.00px;font-size:4.5px;color:#e2e2e2;">TP3_N</div>
<div class="t" style="left:47.40px;top:296.00px;font-size:4.5px;color:#e2e2e2;">2</div>
<div class="t" style="left:91.10px;top:296.00px;font-size:4.5px;color:#e2e2e2;">0</div>
<div class="t" style="left:135.10px;top:296.00px;font-size:4.5px;color:#e2e2e2;">112.40</div>
<div class="t" style="left:179.40px;top:296.00px;font-size:4.5px;color:#e2e2e2;">80.50</div>
<div class="t" style="left:223.10px;top:296.00px;font-size:4.5px;color:#e2e2e2;">94.60</div>
<div class="t" style="left:266.60px;top:296.00px;font-size:4.5px;color:#e2e2e2;">0.56</div>
<div class="t" style="left:310.50px;top:296.00px;font-size:4.5px;color:#e2e2e2;">1.55</div>
<div class="t" style="left:354.50px;top:296.00px;font-size:4.5px;color:#e2e2e2;">84.04</div>
<div class="t" style="left:398.10px;top:296.00px;font-size:4.5px;color:#e2e2e2;">1800.9000</div>
<div class="t" style="left:441.80px;top:296.00px;font-size:4.5px;color:#e2e2e2;">0.265</div>
<div class="a" style="left:168.20px;top:292.20px;width:9.00px;height:8.60px;background:#fc2000;"></div>
<div class="a" style="left:211.90px;top:292.20px;width:9.00px;height:8.60px;background:#a6e000;"></div>
<div class="a" style="left:255.40px;top:292.20px;width:9.00px;height:8.60px;background:#ffb200;"></div>
<div class="a" style="left:2.20px;top:301.20px;width:481.20px;height:8.90px;background:#2e2e2e;"></div>
<div class="a" style="left:2.20px;top:302.00px;width:481.20px;height:7.30px;background:#0a6ad2;"></div>
<div class="t" style="left:4.20px;top:305.15px;font-size:4.5px;color:#e2e2e2;">TP3_P</div>
<div class="t" style="left:47.40px;top:305.15px;font-size:4.5px;color:#e2e2e2;">2</div>
<div class="t" style="left:91.10px;top:305.15px;font-size:4.5px;color:#e2e2e2;">0</div>
<div class="t" style="left:135.10px;top:305.15px;font-size:4.5px;color:#e2e2e2;">112.40</div>
<div class="t" style="left:179.40px;top:305.15px;font-size:4.5px;color:#e2e2e2;">80.50</div>
<div class="t" style="left:223.10px;top:305.15px;font-size:4.5px;color:#e2e2e2;">94.60</div>
<div class="t" style="left:266.60px;top:305.15px;font-size:4.5px;color:#e2e2e2;">0.56</div>
<div class="t" style="left:310.50px;top:305.15px;font-size:4.5px;color:#e2e2e2;">1.55</div>
<div class="t" style="left:354.50px;top:305.15px;font-size:4.5px;color:#e2e2e2;">84.04</div>
<div class="t" style="left:398.10px;top:305.15px;font-size:4.5px;color:#e2e2e2;">1800.0400</div>
<div class="t" style="left:441.80px;top:305.15px;font-size:4.5px;color:#e2e2e2;">0.265</div>
<div class="a" style="left:168.20px;top:301.60px;width:9.00px;height:8.10px;background:#fc2000;"></div>
<div class="a" style="left:211.90px;top:301.60px;width:9.00px;height:8.10px;background:#a6e000;"></div>
<div class="a" style="left:255.40px;top:301.60px;width:9.00px;height:8.10px;background:#ffb200;"></div>
<div class="a" style="left:2.20px;top:310.10px;width:481.20px;height:9.80px;background:#474747;"></div>
<div class="t" style="left:4.20px;top:314.50px;font-size:4.5px;color:#e2e2e2;">TP2_N</div>
<div class="t" style="left:47.40px;top:314.50px;font-size:4.5px;color:#e2e2e2;">2</div>
<div class="t" style="left:91.10px;top:314.50px;font-size:4.5px;color:#e2e2e2;">0</div>
<div class="t" style="left:135.10px;top:314.50px;font-size:4.5px;color:#e2e2e2;">111.50</div>
<div class="t" style="left:179.40px;top:314.50px;font-size:4.5px;color:#e2e2e2;">94.60</div>
<div class="t" style="left:223.10px;top:314.50px;font-size:4.5px;color:#e2e2e2;">94.60</div>
<div class="t" style="left:266.60px;top:314.50px;font-size:4.5px;color:#e2e2e2;">0.92</div>
<div class="t" style="left:310.50px;top:314.50px;font-size:4.5px;color:#e2e2e2;">88.15</div>
<div class="t" style="left:354.50px;top:314.50px;font-size:4.5px;color:#e2e2e2;">88.15</div>
<div class="t" style="left:398.10px;top:314.50px;font-size:4.5px;color:#e2e2e2;">2145.2590</div>
<div class="t" style="left:441.80px;top:314.50px;font-size:4.5px;color:#e2e2e2;">0.316</div>
<div class="a" style="left:168.20px;top:310.50px;width:9.00px;height:9.00px;background:#fc2a00;"></div>
<div class="a" style="left:211.90px;top:310.50px;width:9.00px;height:9.00px;background:#ffb200;"></div>
<div class="a" style="left:255.40px;top:310.50px;width:9.00px;height:9.00px;background:#ffb200;"></div>
<div class="a" style="left:2.20px;top:319.90px;width:481.20px;height:9.00px;background:#2e2e2e;"></div>
<div class="t" style="left:4.20px;top:323.90px;font-size:4.5px;color:#e2e2e2;">TP2_P</div>
<div class="t" style="left:47.40px;top:323.90px;font-size:4.5px;color:#e2e2e2;">2</div>
<div class="t" style="left:91.10px;top:323.90px;font-size:4.5px;color:#e2e2e2;">0</div>
<div class="t" style="left:135.10px;top:323.90px;font-size:4.5px;color:#e2e2e2;">111.50</div>
<div class="t" style="left:179.40px;top:323.90px;font-size:4.5px;color:#e2e2e2;">94.60</div>
<div class="t" style="left:223.10px;top:323.90px;font-size:4.5px;color:#e2e2e2;">94.60</div>
<div class="t" style="left:266.60px;top:323.90px;font-size:4.5px;color:#e2e2e2;">0.92</div>
<div class="t" style="left:310.50px;top:323.90px;font-size:4.5px;color:#e2e2e2;">88.15</div>
<div class="t" style="left:354.50px;top:323.90px;font-size:4.5px;color:#e2e2e2;">88.15</div>
<div class="t" style="left:398.10px;top:323.90px;font-size:4.5px;color:#e2e2e2;">2145.5340</div>
<div class="t" style="left:441.80px;top:323.90px;font-size:4.5px;color:#e2e2e2;">0.316</div>
<div class="a" style="left:168.20px;top:320.30px;width:9.00px;height:8.20px;background:#fc2a00;"></div>
<div class="a" style="left:211.90px;top:320.30px;width:9.00px;height:8.20px;background:#ffb200;"></div>
<div class="a" style="left:255.40px;top:320.30px;width:9.00px;height:8.20px;background:#ffb200;"></div>
<div class="a" style="left:2.20px;top:328.90px;width:481.20px;height:9.50px;background:#474747;"></div>
<div class="t" style="left:4.20px;top:333.15px;font-size:4.5px;color:#e2e2e2;">PP_CLK2</div>
<div class="t" style="left:47.40px;top:333.15px;font-size:4.5px;color:#e2e2e2;">3</div>
<div class="t" style="left:91.10px;top:333.15px;font-size:4.5px;color:#e2e2e2;">0</div>
<div class="t" style="left:135.10px;top:333.15px;font-size:4.5px;color:#e2e2e2;">100.10</div>
<div class="t" style="left:179.40px;top:333.15px;font-size:4.5px;color:#e2e2e2;">74.50</div>
<div class="t" style="left:223.10px;top:333.15px;font-size:4.5px;color:#e2e2e2;">76.00</div>
<div class="t" style="left:266.60px;top:333.15px;font-size:4.5px;color:#e2e2e2;">0.61</div>
<div class="t" style="left:310.50px;top:333.15px;font-size:4.5px;color:#e2e2e2;">4.41</div>
<div class="t" style="left:354.50px;top:333.15px;font-size:4.5px;color:#e2e2e2;">82.99</div>
<div class="t" style="left:398.10px;top:333.15px;font-size:4.5px;color:#e2e2e2;">4955.5290</div>
<div class="t" style="left:441.80px;top:333.15px;font-size:4.5px;color:#e2e2e2;">0.785</div>
<div class="a" style="left:168.20px;top:329.30px;width:9.00px;height:8.70px;background:#ff8200;"></div>
<div class="a" style="left:211.90px;top:329.30px;width:9.00px;height:8.70px;background:#5ad800;"></div>
<div class="a" style="left:255.40px;top:329.30px;width:9.00px;height:8.70px;background:#5ad800;"></div>
<div class="a" style="left:2.20px;top:338.40px;width:481.20px;height:8.70px;background:#2e2e2e;"></div>
<div class="t" style="left:4.20px;top:342.25px;font-size:4.5px;color:#e2e2e2;">PP_CLK2_N</div>
<div class="t" style="left:47.40px;top:342.25px;font-size:4.5px;color:#e2e2e2;">3</div>
<div class="t" style="left:91.10px;top:342.25px;font-size:4.5px;color:#e2e2e2;">0</div>
<div class="t" style="left:135.10px;top:342.25px;font-size:4.5px;color:#e2e2e2;">100.10</div>
<div class="t" style="left:179.40px;top:342.25px;font-size:4.5px;color:#e2e2e2;">74.50</div>
<div class="t" style="left:223.10px;top:342.25px;font-size:4.5px;color:#e2e2e2;">76.00</div>
<div class="t" style="left:266.60px;top:342.25px;font-size:4.5px;color:#e2e2e2;">0.61</div>
<div class="t" style="left:310.50px;top:342.25px;font-size:4.5px;color:#e2e2e2;">4.41</div>
<div class="t" style="left:354.50px;top:342.25px;font-size:4.5px;color:#e2e2e2;">82.99</div>
<div class="t" style="left:398.10px;top:342.25px;font-size:4.5px;color:#e2e2e2;">4956.1590</div>
<div class="t" style="left:441.80px;top:342.25px;font-size:4.5px;color:#e2e2e2;">0.785</div>
<div class="a" style="left:168.20px;top:338.80px;width:9.00px;height:7.90px;background:#ff8200;"></div>
<div class="a" style="left:211.90px;top:338.80px;width:9.00px;height:7.90px;background:#5ad800;"></div>
<div class="a" style="left:255.40px;top:338.80px;width:9.00px;height:7.90px;background:#5ad800;"></div>
<div class="a" style="left:2.20px;top:347.10px;width:481.20px;height:8.70px;background:#474747;"></div>
<div class="t" style="left:4.20px;top:350.95px;font-size:4.5px;color:#e2e2e2;">PP_CLK1</div>
<div class="t" style="left:47.40px;top:350.95px;font-size:4.5px;color:#e2e2e2;">3</div>
<div class="t" style="left:91.10px;top:350.95px;font-size:4.5px;color:#e2e2e2;">0</div>
<div class="t" style="left:135.10px;top:350.95px;font-size:4.5px;color:#e2e2e2;">98.20</div>
<div class="t" style="left:179.40px;top:350.95px;font-size:4.5px;color:#e2e2e2;">74.50</div>
<div class="t" style="left:223.10px;top:350.95px;font-size:4.5px;color:#e2e2e2;">76.30</div>
<div class="t" style="left:266.60px;top:350.95px;font-size:4.5px;color:#e2e2e2;">0.08</div>
<div class="t" style="left:310.50px;top:350.95px;font-size:4.5px;color:#e2e2e2;">4.70</div>
<div class="t" style="left:354.50px;top:350.95px;font-size:4.5px;color:#e2e2e2;">86.02</div>
<div class="t" style="left:398.10px;top:350.95px;font-size:4.5px;color:#e2e2e2;">4060.0050</div>
<div class="t" style="left:441.80px;top:350.95px;font-size:4.5px;color:#e2e2e2;">0.641</div>
<div class="a" style="left:168.20px;top:347.50px;width:9.00px;height:7.90px;background:#ff8c00;"></div>
<div class="a" style="left:211.90px;top:347.50px;width:9.00px;height:7.90px;background:#5ad800;"></div>
<div class="a" style="left:255.40px;top:347.50px;width:9.00px;height:7.90px;background:#5ad800;"></div>
<div class="a" style="left:1.80px;top:263.00px;width:0.90px;height:92.80px;background:#5a5a5a;"></div>
<div class="a" style="left:45.00px;top:263.00px;width:0.90px;height:92.80px;background:#5a5a5a;"></div>
<div class="a" style="left:88.70px;top:263.00px;width:0.90px;height:92.80px;background:#5a5a5a;"></div>
<div class="a" style="left:132.70px;top:263.00px;width:0.90px;height:92.80px;background:#5a5a5a;"></div>
<div class="a" style="left:177.00px;top:270.80px;width:0.90px;height:85.00px;background:#5a5a5a;"></div>
<div class="a" style="left:220.70px;top:270.80px;width:0.90px;height:85.00px;background:#5a5a5a;"></div>
<div class="a" style="left:264.20px;top:263.00px;width:0.90px;height:92.80px;background:#5a5a5a;"></div>
<div class="a" style="left:308.10px;top:270.80px;width:0.90px;height:85.00px;background:#5a5a5a;"></div>
<div class="a" style="left:352.10px;top:270.80px;width:0.90px;height:85.00px;background:#5a5a5a;"></div>
<div class="a" style="left:395.70px;top:263.00px;width:0.90px;height:92.80px;background:#5a5a5a;"></div>
<div class="a" style="left:439.40px;top:270.80px;width:0.90px;height:85.00px;background:#5a5a5a;"></div>
<div class="a" style="left:483.00px;top:263.00px;width:0.90px;height:92.80px;background:#5a5a5a;"></div>
<div class="a" style="left:2.20px;top:263.00px;width:481.20px;height:0.80px;background:#5a5a5a;"></div>
<div class="a" style="left:133.10px;top:270.80px;width:350.30px;height:0.80px;background:#5a5a5a;"></div>
<div class="a" style="left:2.20px;top:282.80px;width:481.20px;height:0.80px;background:#5a5a5a;"></div>
<div class="a" style="left:2.20px;top:291.40px;width:481.20px;height:0.80px;background:#5a5a5a;"></div>
<div class="a" style="left:2.20px;top:262.80px;width:670.60px;height:0.70px;background:#5c5c5c;"></div>
<div class="a" style="left:672.20px;top:262.80px;width:0.80px;height:94.00px;background:#5c5c5c;"></div>
<div class="a" style="left:668.40px;top:264.00px;width:2.80px;height:21.00px;background:#6a6a6a;"></div>
<div class="a" style="left:2.20px;top:355.60px;width:671.00px;height:2.00px;background:#6c6c6c;"></div>
<div class="t" style="left:-36.20px;top:271.90px;width:120px;text-align:center;font-size:5.0px;color:#ececec;font-weight:bold;">Net Name</div>
<div class="t" style="left:7.25px;top:271.90px;width:120px;text-align:center;font-size:5.0px;color:#ececec;font-weight:bold;">Vias</div>
<div class="t" style="left:51.10px;top:271.90px;width:120px;text-align:center;font-size:5.0px;color:#ececec;font-weight:bold;">No Ref</div>
<div class="t" style="left:138.85px;top:266.10px;width:120px;text-align:center;font-size:4.7px;color:#e6e6e6;">Impedance (Ohm)</div>
<div class="t" style="left:270.35px;top:266.10px;width:120px;text-align:center;font-size:4.7px;color:#e6e6e6;">Impedance Length (%)</div>
<div class="t" style="left:379.75px;top:266.10px;width:120px;text-align:center;font-size:4.7px;color:#e6e6e6;">Trace Total</div>
<div class="t" style="left:95.25px;top:275.60px;width:120px;text-align:center;font-size:4.9px;color:#ececec;font-weight:bold;">Max</div>
<div class="t" style="left:139.25px;top:275.60px;width:120px;text-align:center;font-size:4.9px;color:#ececec;font-weight:bold;">Min</div>
<div class="t" style="left:182.85px;top:275.60px;width:120px;text-align:center;font-size:4.9px;color:#ececec;font-weight:bold;">Typ</div>
<div class="t" style="left:226.55px;top:275.60px;width:120px;text-align:center;font-size:4.9px;color:#ececec;font-weight:bold;">Max</div>
<div class="t" style="left:270.50px;top:275.60px;width:120px;text-align:center;font-size:4.9px;color:#ececec;font-weight:bold;">Min</div>
<div class="t" style="left:314.30px;top:275.60px;width:120px;text-align:center;font-size:4.9px;color:#ececec;font-weight:bold;">Typ</div>
<div class="t" style="left:357.95px;top:275.60px;width:120px;text-align:center;font-size:4.9px;color:#ececec;font-weight:bold;">Length</div>
<div class="t" style="left:401.60px;top:275.60px;width:120px;text-align:center;font-size:4.9px;color:#ececec;font-weight:bold;">Delay (ns)</div>
<div class="a" style="left:172.40px;top:275.40px;width:0;height:0;border-left:1.40px solid transparent;border-right:1.40px solid transparent;border-top:2.40px solid #e0e0e0"></div>
<div class="t" style="left:4.40px;top:287.60px;font-size:4.8px;color:#dcdcdc;">*</div>
<div class="a" style="left:39.00px;top:286.00px;width:0;height:0;border-left:2.20px solid transparent;border-right:2.20px solid transparent;border-top:3.20px solid #f4f4f4"></div>
<div class="t" style="left:47.60px;top:287.60px;font-size:4.8px;color:#dcdcdc;">*</div>
<div class="a" style="left:82.70px;top:286.00px;width:0;height:0;border-left:2.20px solid transparent;border-right:2.20px solid transparent;border-top:3.20px solid #f4f4f4"></div>
<div class="t" style="left:91.30px;top:287.60px;font-size:4.8px;color:#dcdcdc;">*</div>
<div class="a" style="left:126.70px;top:286.00px;width:0;height:0;border-left:2.20px solid transparent;border-right:2.20px solid transparent;border-top:3.20px solid #f4f4f4"></div>
<div class="t" style="left:135.30px;top:287.60px;font-size:4.8px;color:#dcdcdc;">*</div>
<div class="a" style="left:171.00px;top:286.00px;width:0;height:0;border-left:2.20px solid transparent;border-right:2.20px solid transparent;border-top:3.20px solid #f4f4f4"></div>
<div class="t" style="left:179.60px;top:287.60px;font-size:4.8px;color:#dcdcdc;">*</div>
<div class="a" style="left:214.70px;top:286.00px;width:0;height:0;border-left:2.20px solid transparent;border-right:2.20px solid transparent;border-top:3.20px solid #f4f4f4"></div>
<div class="t" style="left:223.30px;top:287.60px;font-size:4.8px;color:#dcdcdc;">*</div>
<div class="a" style="left:258.20px;top:286.00px;width:0;height:0;border-left:2.20px solid transparent;border-right:2.20px solid transparent;border-top:3.20px solid #f4f4f4"></div>
<div class="t" style="left:266.80px;top:287.60px;font-size:4.8px;color:#dcdcdc;">*</div>
<div class="a" style="left:302.10px;top:286.00px;width:0;height:0;border-left:2.20px solid transparent;border-right:2.20px solid transparent;border-top:3.20px solid #f4f4f4"></div>
<div class="t" style="left:310.70px;top:287.60px;font-size:4.8px;color:#dcdcdc;">*</div>
<div class="a" style="left:346.10px;top:286.00px;width:0;height:0;border-left:2.20px solid transparent;border-right:2.20px solid transparent;border-top:3.20px solid #f4f4f4"></div>
<div class="t" style="left:354.70px;top:287.60px;font-size:4.8px;color:#dcdcdc;">*</div>
<div class="a" style="left:389.70px;top:286.00px;width:0;height:0;border-left:2.20px solid transparent;border-right:2.20px solid transparent;border-top:3.20px solid #f4f4f4"></div>
<div class="t" style="left:398.30px;top:287.60px;font-size:4.8px;color:#dcdcdc;">*</div>
<div class="a" style="left:433.40px;top:286.00px;width:0;height:0;border-left:2.20px solid transparent;border-right:2.20px solid transparent;border-top:3.20px solid #f4f4f4"></div>
<div class="t" style="left:442.00px;top:287.60px;font-size:4.8px;color:#dcdcdc;">*</div>
<div class="a" style="left:477.00px;top:286.00px;width:0;height:0;border-left:2.20px solid transparent;border-right:2.20px solid transparent;border-top:3.20px solid #f4f4f4"></div>
<div class="t" style="left:2.20px;top:362.20px;font-size:4.85px;color:#e0e0e0;">Detailed Table</div>
<div class="a" style="left:36.90px;top:358.50px;width:40.10px;height:9.30px;background:#0a6ad8;"></div>
<div class="a" style="left:80.00px;top:358.50px;width:40.00px;height:9.30px;background:#464646;border:0.7px solid #5c5c5c"></div>
<svg class="a" style="left:54px;top:360px" width="6" height="6" viewBox="0 0 6 6"><path d="M0.5 0.5H5.5L3.6 3V5.5L2.4 4.8V3Z" fill="#1a58a8"/></svg>
<svg class="a" style="left:97.3px;top:359.8px" width="7" height="7" viewBox="0 0 7 7"><path d="M0.3 0.3H5.3L3.4 2.8V5.8L2.2 5V2.8Z" fill="#f0a830"/><circle cx="5.2" cy="5" r="1.3" fill="#d86080"/></svg>
<div class="a" style="left:2.60px;top:370.50px;width:670.40px;height:57.00px;background:#444444;"></div>
<div class="a" style="left:2.60px;top:370.30px;width:670.40px;height:0.70px;background:#5c5c5c;"></div>
<div class="a" style="left:672.30px;top:370.30px;width:0.80px;height:57.00px;background:#5c5c5c;"></div>
<div class="a" style="left:668.80px;top:389.40px;width:2.80px;height:38.00px;background:#6a6a6a;"></div>
<div class="a" style="left:2.40px;top:370.50px;width:218.20px;height:13.10px;background:#3f3f3f;"></div>
<div class="a" style="left:2.40px;top:383.60px;width:218.20px;height:8.80px;background:#3a3a3a;"></div>
<div class="a" style="left:2.40px;top:392.40px;width:218.20px;height:9.80px;background:#474747;"></div>
<div class="t" style="left:4.40px;top:396.80px;font-size:4.5px;color:#e2e2e2;">94.60</div>
<div class="t" style="left:47.60px;top:396.80px;font-size:4.5px;color:#e2e2e2;">219.5970</div>
<div class="t" style="left:91.30px;top:396.80px;font-size:4.5px;color:#e2e2e2;">32.50</div>
<div class="t" style="left:135.50px;top:396.80px;font-size:4.5px;color:#e2e2e2;">BOTTOM</div>
<div class="t" style="left:179.50px;top:396.80px;font-size:4.5px;color:#e2e2e2;">(-1643.9782 ...</div>
<div class="a" style="left:36.80px;top:392.40px;width:8.80px;height:9.80px;background:#ffb200;"></div>
<div class="a" style="left:2.40px;top:402.20px;width:218.20px;height:9.40px;background:#2e2e2e;"></div>
<div class="t" style="left:4.40px;top:406.40px;font-size:4.5px;color:#e2e2e2;">94.60</div>
<div class="t" style="left:47.60px;top:406.40px;font-size:4.5px;color:#e2e2e2;">264.1440</div>
<div class="t" style="left:91.30px;top:406.40px;font-size:4.5px;color:#e2e2e2;">59.10</div>
<div class="t" style="left:135.50px;top:406.40px;font-size:4.5px;color:#e2e2e2;">BOTTOM</div>
<div class="t" style="left:179.50px;top:406.40px;font-size:4.5px;color:#e2e2e2;">(-1915.9000 ...</div>
<div class="a" style="left:36.80px;top:402.20px;width:8.80px;height:9.40px;background:#ffb200;"></div>
<div class="a" style="left:2.40px;top:411.60px;width:218.20px;height:9.20px;background:#474747;"></div>
<div class="t" style="left:4.40px;top:415.70px;font-size:4.5px;color:#e2e2e2;">94.60</div>
<div class="t" style="left:47.60px;top:415.70px;font-size:4.5px;color:#e2e2e2;">13.6000</div>
<div class="t" style="left:91.30px;top:415.70px;font-size:4.5px;color:#e2e2e2;">2.00</div>
<div class="t" style="left:135.50px;top:415.70px;font-size:4.5px;color:#e2e2e2;">BOTTOM</div>
<div class="t" style="left:179.50px;top:415.70px;font-size:4.5px;color:#e2e2e2;">(-1979.5000 ...</div>
<div class="a" style="left:36.80px;top:411.60px;width:8.80px;height:9.20px;background:#ffb200;"></div>
<div class="a" style="left:2.40px;top:420.80px;width:218.20px;height:9.20px;background:#0a6ad2;"></div>
<div class="t" style="left:4.40px;top:424.90px;font-size:4.5px;color:#e2e2e2;">112.40</div>
<div class="t" style="left:47.60px;top:424.90px;font-size:4.5px;color:#e2e2e2;">10.0000</div>
<div class="t" style="left:91.30px;top:424.90px;font-size:4.5px;color:#e2e2e2;">1.50</div>
<div class="t" style="left:135.50px;top:424.90px;font-size:4.5px;color:#e2e2e2;">BOTTOM</div>
<div class="t" style="left:179.50px;top:424.90px;font-size:4.5px;color:#e2e2e2;">(-1945.9000 ...</div>
<div class="a" style="left:36.80px;top:420.80px;width:8.80px;height:9.20px;background:#a8384a;"></div>
<div class="a" style="left:2.00px;top:370.50px;width:0.90px;height:57.00px;background:#5a5a5a;"></div>
<div class="a" style="left:45.20px;top:370.50px;width:0.90px;height:57.00px;background:#5a5a5a;"></div>
<div class="a" style="left:88.90px;top:370.50px;width:0.90px;height:57.00px;background:#5a5a5a;"></div>
<div class="a" style="left:133.10px;top:370.50px;width:0.90px;height:57.00px;background:#5a5a5a;"></div>
<div class="a" style="left:177.10px;top:370.50px;width:0.90px;height:57.00px;background:#5a5a5a;"></div>
<div class="a" style="left:220.20px;top:370.50px;width:0.90px;height:57.00px;background:#5a5a5a;"></div>
<div class="a" style="left:2.40px;top:383.20px;width:218.20px;height:0.80px;background:#5a5a5a;"></div>
<div class="a" style="left:2.40px;top:392.00px;width:218.20px;height:0.80px;background:#5a5a5a;"></div>
<div class="t" style="left:4.60px;top:376.20px;font-size:4.9px;color:#ececec;font-weight:bold">Impedance (Ohr</div>
<div class="t" style="left:7.45px;top:376.20px;width:120px;text-align:center;font-size:4.9px;color:#ececec;font-weight:bold;">Length</div>
<div class="t" style="left:51.40px;top:376.20px;width:120px;text-align:center;font-size:4.9px;color:#ececec;font-weight:bold;">Trace Delay (ps)</div>
<div class="t" style="left:95.50px;top:376.20px;width:120px;text-align:center;font-size:4.9px;color:#ececec;font-weight:bold;">Layer</div>
<div class="t" style="left:139.05px;top:376.20px;width:120px;text-align:center;font-size:4.9px;color:#ececec;font-weight:bold;">Location (x,y)</div>
<div class="a" style="left:39.40px;top:372.00px;width:5.60px;height:10.00px;background:#3f3f3f;"></div>
<div class="a" style="left:40.6px;top:375.6px;width:0;height:0;border-left:1.8px solid transparent;border-right:1.8px solid transparent;border-bottom:2.8px solid #e0e0e0"></div>
<div class="t" style="left:4.60px;top:388.00px;font-size:4.8px;color:#dcdcdc;">*</div>
<div class="a" style="left:39.20px;top:386.30px;width:0;height:0;border-left:2.20px solid transparent;border-right:2.20px solid transparent;border-top:3.20px solid #f4f4f4"></div>
<div class="t" style="left:47.80px;top:388.00px;font-size:4.8px;color:#dcdcdc;">*</div>
<div class="a" style="left:82.90px;top:386.30px;width:0;height:0;border-left:2.20px solid transparent;border-right:2.20px solid transparent;border-top:3.20px solid #f4f4f4"></div>
<div class="t" style="left:91.50px;top:388.00px;font-size:4.8px;color:#dcdcdc;">*</div>
<div class="a" style="left:127.10px;top:386.30px;width:0;height:0;border-left:2.20px solid transparent;border-right:2.20px solid transparent;border-top:3.20px solid #f4f4f4"></div>
<div class="t" style="left:135.70px;top:388.00px;font-size:4.8px;color:#dcdcdc;">*</div>
<div class="a" style="left:171.10px;top:386.30px;width:0;height:0;border-left:2.20px solid transparent;border-right:2.20px solid transparent;border-top:3.20px solid #f4f4f4"></div>
<div class="t" style="left:179.70px;top:388.00px;font-size:4.8px;color:#dcdcdc;">*</div>
<div class="a" style="left:214.20px;top:386.30px;width:0;height:0;border-left:2.20px solid transparent;border-right:2.20px solid transparent;border-top:3.20px solid #f4f4f4"></div>
</div></body></html>
